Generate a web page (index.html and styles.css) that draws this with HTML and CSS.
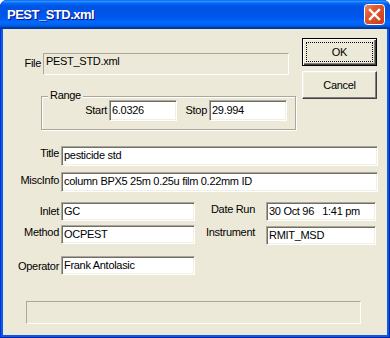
FILE: index.html
```html
<!DOCTYPE html>
<html>
<head>
<meta charset="utf-8">
<link rel="stylesheet" href="styles.css">
</head>
<body>
<div class="window">
  <div class="titlebar">
    <span class="title">PEST_STD.xml</span>
    <span class="close">
      <svg width="21" height="21" viewBox="0 0 21 21">
        <defs>
          <linearGradient id="cg" x1="0" y1="0" x2="1" y2="1">
            <stop offset="0" stop-color="#f08c6a"/>
            <stop offset="0.35" stop-color="#e2582f"/>
            <stop offset="1" stop-color="#c93a16"/>
          </linearGradient>
        </defs>
        <rect x="0.5" y="0.5" width="20" height="20" rx="3" fill="url(#cg)" stroke="#fff"/>
        <path d="M6 6 L15 15 M15 6 L6 15" stroke="#fff" stroke-width="2.4" stroke-linecap="square" fill="none"/>
      </svg>
    </span>
  </div>
  <div class="client">
    <div class="top">
      <div class="top-left">
        <div class="row">
          <span class="lbl lbl-file">File</span>
          <div class="field readonly w-file">PEST_STD.xml</div>
        </div>
        <div class="group">
          <div class="legend">Range</div>
          <div class="range-row">
            <span class="lbl lbl-start">Start</span>
            <div class="field w-start">6.0326</div>
            <span class="lbl lbl-stop">Stop</span>
            <div class="field w-stop">29.994</div>
          </div>
        </div>
      </div>
      <div class="buttons">
        <button class="btn default"><span class="focus">OK</span></button>
        <button class="btn">Cancel</button>
      </div>
    </div>

    <div class="row row-title">
      <span class="lbl pt0">Title</span>
      <div class="field tall w-wide">pesticide std</div>
    </div>
    <div class="row row-misc">
      <span class="lbl pt1">MiscInfo</span>
      <div class="field tall w-wide">column BPX5 25m 0.25u film 0.22mm ID</div>
    </div>
    <div class="row row-inlet">
      <span class="lbl pt2">Inlet</span>
      <div class="field short w-short">GC</div>
      <span class="lbl-r">Date Run</span>
      <div class="field short w-date">30 Oct 96   1:41 pm</div>
    </div>
    <div class="row row-method">
      <span class="lbl pt0">Method</span>
      <div class="field short w-short">OCPEST</div>
      <span class="lbl-r">Instrument</span>
      <div class="field short w-date nudge">RMIT_MSD</div>
    </div>
    <div class="row row-operator">
      <span class="lbl pt3">Operator</span>
      <div class="field short w-short">Frank Antolasic</div>
    </div>
    <div class="status"></div>
  </div>
</div>
</body>
</html>
```

FILE: styles.css
```css
html, body {
  margin: 0;
  padding: 0;
  background: #ffffff;
}

body {
  font-family: "Liberation Sans", Arial, sans-serif;
  font-size: 11px;
  letter-spacing: -0.3px;
  color: #000;
}

.window {
  width: 390px;
  height: 338px;
  box-sizing: border-box;
  background: #0a5ae6;
  box-shadow: inset 1px 0 #0831d9, inset -1px 0 #001ea0, inset 0 -1px #001ea0;
  border-radius: 7px 7px 0 0;
  display: flex;
  flex-direction: column;
  overflow: hidden;
}

.titlebar {
  height: 29px;
  flex: none;
  display: flex;
  align-items: center;
  justify-content: space-between;
  padding: 0 5px 0 7px;
  background: linear-gradient(to bottom,
    #0058ee 0%, #3593ff 4%, #288eff 6%, #127dff 8%, #036ffc 10%,
    #0262ee 14%, #0057e5 20%, #0054e3 24%, #0055eb 56%, #005bf5 66%,
    #026afe 76%, #0062ef 86%, #0052d6 92%, #0040ab 94%, #003092 100%);
}

.title {
  color: #fff;
  font-family: "Liberation Sans", Arial, sans-serif;
  font-weight: bold;
  font-size: 13px;
  letter-spacing: -0.5px;
  text-shadow: 1px 1px #0f1089;
}

.close {
  display: block;
  width: 21px;
  height: 21px;
}
.close svg { display: block; }

.client {
  flex: 1;
  margin: 0 3px 3px;
  background: #ece9d8;
}

.top {
  display: flex;
  align-items: flex-start;
}

.top-left {
  width: 293px;
  padding-top: 24px;
}

.row {
  display: flex;
  align-items: flex-start;
}

.lbl {
  width: 56px;
  margin-right: 2px;
  text-align: right;
  line-height: 14px;
  white-space: nowrap;
}
.pt0 { padding-top: 0; }
.pt1 { padding-top: 1px; }
.pt2 { padding-top: 2px; }
.pt3 { padding-top: 3px; }

.lbl-file {
  width: 38px;
  padding-top: 3px;
}

.lbl-r {
  width: 60px;
  margin-right: 11px;
  text-align: right;
  line-height: 14px;
  white-space: nowrap;
}

.field {
  box-sizing: border-box;
  background: #fff;
  border: 1px solid;
  border-color: #aca899 #fff #fff #aca899;
  box-shadow: inset 1px 1px #716f64, inset -1px -1px #f1efe2;
  padding: 0 2px;
  white-space: pre;
  overflow: hidden;
}

.readonly {
  background: #ece9d8;
  box-shadow: none;
}

.w-file { width: 246px; height: 22px; line-height: 14px; }
.w-start { width: 68px; height: 21px; line-height: 19px; }
.w-stop { width: 78px; height: 21px; line-height: 19px; }
.tall { height: 20px; line-height: 16px; }
.short { height: 19px; line-height: 17px; }
.w-wide { width: 317px; }
.w-short { width: 134px; }
.w-date { width: 110px; }
.nudge { margin-top: 1px; }

.group {
  margin: 21px 0 0 38px;
  width: 255px;
  box-sizing: border-box;
  border: 1px solid #aca899;
  box-shadow: inset 1px 1px #fff, 1px 1px #fff;
  padding: 0 0 8px;
}

.legend {
  width: fit-content;
  margin: -8px 0 0 6px;
  padding: 0 2px;
  line-height: 13px;
  background: #ece9d8;
}

.range-row {
  display: flex;
  align-items: flex-start;
  margin-top: -2px;
}

.lbl-start {
  width: 65px;
  padding-top: 3px;
}
.lbl-stop {
  width: 30px;
  padding-top: 3px;
}

.buttons {
  margin: 9px 0 0 6px;
  display: flex;
  flex-direction: column;
  gap: 5px;
}

.btn {
  width: 75px;
  height: 28px;
  box-sizing: border-box;
  margin: 0;
  padding: 0;
  background: #ece9d8;
  font-family: "Liberation Sans", Arial, sans-serif;
  font-size: 11px;
  letter-spacing: -0.3px;
  color: #000;
  border: 1px solid;
  border-color: #fff #404040 #404040 #fff;
  box-shadow: inset -1px -1px #808080, inset 1px 1px #f1efe2;
  display: flex;
  align-items: center;
  justify-content: center;
}

.btn.default {
  border: 1px solid #000;
  box-shadow: inset 1px 1px #fff, inset -1px -1px #404040, inset -2px -2px #808080;
  padding: 3px;
}

.focus {
  flex: 1;
  align-self: stretch;
  display: flex;
  align-items: center;
  justify-content: center;
  border: 1px dotted #000;
}

.row-title { margin-top: 16px; }
.row-misc { margin-top: 6px; }
.row-inlet { margin-top: 10px; }
.row-method { margin-top: 4px; }
.row-operator { margin-top: 11px; }

.status {
  margin: 26px 0 0 23px;
  width: 335px;
  height: 23px;
  box-sizing: border-box;
  border: 1px solid;
  border-color: #aca899 #fff #fff #aca899;
}
```
